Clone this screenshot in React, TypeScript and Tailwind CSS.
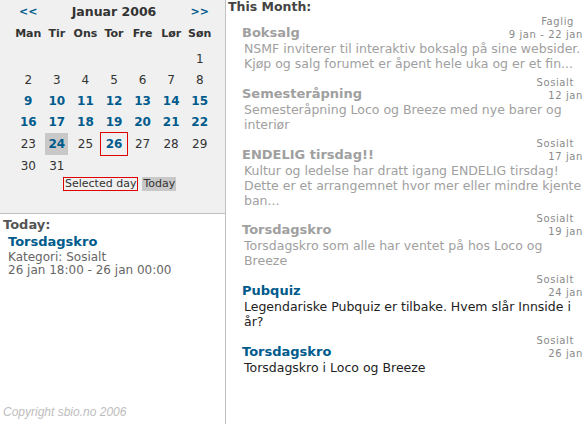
import React from "react";

const BLUE = "text-[#005b8c]";

type Day = { n: number; kind: "normal" | "bold" | "today" | "selected" };

const weeks: (Day | null)[][] = [
  [null, null, null, null, null, null, { n: 1, kind: "normal" }],
  [2, 3, 4, 5, 6, 7, 8].map((n) => ({ n, kind: "normal" as const })),
  [9, 10, 11, 12, 13, 14, 15].map((n) => ({ n, kind: "bold" as const })),
  [16, 17, 18, 19, 20, 21, 22].map((n) => ({ n, kind: "bold" as const })),
  [
    { n: 23, kind: "normal" },
    { n: 24, kind: "today" },
    { n: 25, kind: "normal" },
    { n: 26, kind: "selected" },
    { n: 27, kind: "normal" },
    { n: 28, kind: "normal" },
    { n: 29, kind: "normal" },
  ],
  [{ n: 30, kind: "normal" }, { n: 31, kind: "normal" }, null, null, null, null, null],
];

const rowHeights = ["h-[21px]", "h-[21px]", "h-[21px]", "h-[21px]", "h-[24px]", "h-[20px]"];

function Cell({ d }: { d: Day | null }) {
  if (!d) return <div />;
  if (d.kind === "normal")
    return <div className="flex items-center justify-center text-[12px] text-[#333]">{d.n}</div>;
  if (d.kind === "bold")
    return <div className={`flex items-center justify-center text-[12px] font-bold ${BLUE}`}>{d.n}</div>;
  if (d.kind === "today")
    return (
      <div className="flex items-center justify-center">
        <div className={`flex h-[22px] w-[23px] items-center justify-center bg-[#c8c8c8] text-[12px] font-bold ${BLUE}`}>
          {d.n}
        </div>
      </div>
    );
  return (
    <div className={`flex items-center justify-center border border-[#e00000] text-[12px] font-bold ${BLUE}`}>
      {d.n}
    </div>
  );
}

type Ev = {
  title: string;
  cat: string;
  date: string;
  lines: string[];
  past: boolean;
  gap: string;
};

const events: Ev[] = [
  {
    title: "Boksalg",
    cat: "Faglig",
    date: "9 jan - 22 jan",
    lines: [
      "NSMF inviterer til interaktiv boksalg på sine websider.",
      "Kjøp og salg forumet er åpent hele uka og er et fin...",
    ],
    past: true,
    gap: "mb-[5px]",
  },
  {
    title: "Semesteråpning",
    cat: "Sosialt",
    date: "12 jan",
    lines: ["Semesteråpning Loco og Breeze med nye barer og", "interiør"],
    past: true,
    gap: "mb-[5px]",
  },
  {
    title: "ENDELIG tirsdag!!",
    cat: "Sosialt",
    date: "17 jan",
    lines: [
      "Kultur og ledelse har dratt igang ENDELIG tirsdag!",
      "Dette er et arrangemnet hvor mer eller mindre kjente",
      "ban...",
    ],
    past: true,
    gap: "mb-[4px]",
  },
  {
    title: "Torsdagskro",
    cat: "Sosialt",
    date: "19 jan",
    lines: ["Torsdagskro som alle har ventet på hos Loco og", "Breeze"],
    past: true,
    gap: "mb-[5px]",
  },
  {
    title: "Pubquiz",
    cat: "Sosialt",
    date: "24 jan",
    lines: ["Legendariske Pubquiz er tilbake. Hvem slår Innside i", "år?"],
    past: false,
    gap: "mb-[5px]",
  },
  {
    title: "Torsdagskro",
    cat: "Sosialt",
    date: "26 jan",
    lines: ["Torsdagskro i Loco og Breeze"],
    past: false,
    gap: "mb-[5px]",
  },
];

export default function App() {
  const font = { fontFamily: '"DejaVu Sans", Verdana, sans-serif' };
  return (
    <div className="flex h-[424px] w-[586px] bg-white" style={font}>
      {/* Left column */}
      <div className="flex h-full w-[226px] shrink-0 flex-col border-r border-[#c0c0c0]">
        <div className="h-[214px] border-b border-[#c0c0c0] bg-[#f0f0f0]">
          <div className="ml-[14px] w-[200px]">
            <div className="grid h-[24px] grid-cols-7 items-center">
              <div className={`text-center text-[11px] font-bold ${BLUE}`}>&lt;&lt;</div>
              <div className="col-span-5 text-center text-[12.5px] font-bold text-[#333]">Januar 2006</div>
              <div className={`text-center text-[11px] font-bold ${BLUE}`}>&gt;&gt;</div>
            </div>
            <div className="grid h-[21px] grid-cols-7 items-center text-[11px] font-bold text-[#333]">
              {["Man", "Tir", "Ons", "Tor", "Fre", "Lør", "Søn"].map((d) => (
                <div key={d} className="text-center">
                  {d}
                </div>
              ))}
            </div>
            <div className="mt-[3px]">
              {weeks.map((w, i) => (
                <div key={i} className={`grid grid-cols-7 ${rowHeights[i]}`}>
                  {w.map((d, j) => (
                    <Cell key={j} d={d} />
                  ))}
                </div>
              ))}
            </div>
          </div>
          <div className="mt-[1px] flex items-center gap-[4px] pl-[63px] text-[11px] text-[#333]">
            <span className="border border-[#e00000] px-[1px] leading-[12px]">Selected day</span>
            <span className="bg-[#c8c8c8] px-[1px] leading-[14px]">Today</span>
          </div>
        </div>

        <div className="pl-[3px] pt-[3px]">
          <div className="text-[13px] font-bold leading-[16px] text-[#555]">Today:</div>
          <div className="pl-[5px]">
            <div className={`text-[13px] font-bold leading-[18px] ${BLUE}`}>Torsdagskro</div>
            <div className="text-[12px] leading-[13px] text-[#666]">Kategori: Sosialt</div>
            <div className="text-[12px] leading-[13px] text-[#666]">26 jan 18:00 - 26 jan 00:00</div>
          </div>
        </div>

        <div
          className="mt-auto pb-[5px] pl-[3px] text-[12px] italic leading-[14px] text-[#bdbdbd]"
          style={{ fontFamily: '"Liberation Sans", Arial, sans-serif' }}
        >
          Copyright sbio.no 2006
        </div>
      </div>

      {/* Right column */}
      <div className="flex-1 pr-[3px]">
        <div className="h-[15px] pl-[2px] text-[12.5px] font-bold leading-[13px] text-[#444]">This Month:</div>
        <div className="pl-[16px]">
          {events.map((e, i) => (
            <div key={i} className={e.gap}>
              <div className="flex items-end justify-between">
                <div
                  className={`text-[13px] font-bold leading-[16px] ${e.past ? "text-[#a0a0a0]" : BLUE}`}
                >
                  {e.title}
                </div>
                <div className="text-right text-[10px] leading-[13px] tracking-[0.6px] text-[#8a8a8a]">
                  <div className="pr-[9px]">{e.cat}</div>
                  <div>{e.date}</div>
                </div>
              </div>
              <div
                className={`whitespace-nowrap pl-[2px] text-[12.5px] leading-[15px] ${
                  e.past ? "text-[#a0a0a0]" : "text-[#222]"
                }`}
              >
                {e.lines.map((l, k) => (
                  <div key={k}>{l}</div>
                ))}
              </div>
            </div>
          ))}
        </div>
      </div>
    </div>
  );
}
